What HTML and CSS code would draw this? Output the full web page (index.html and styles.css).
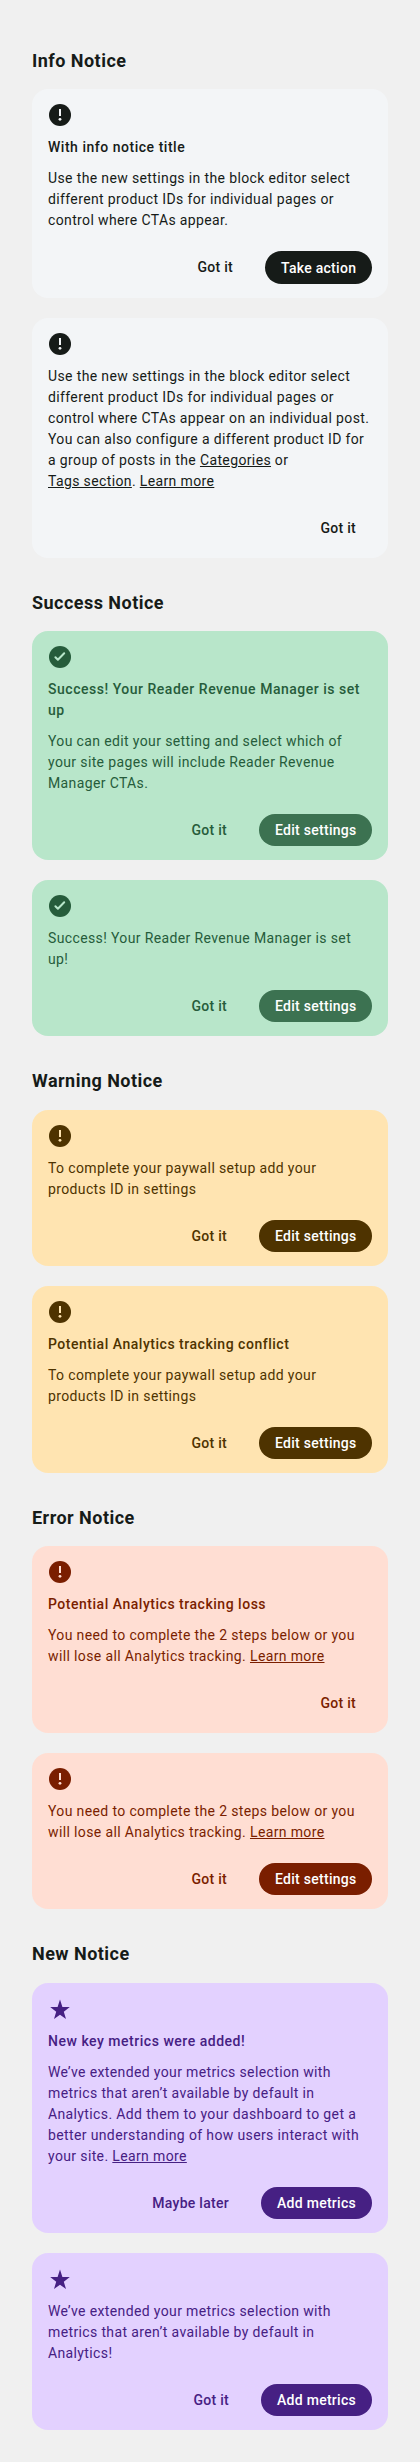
FILE: index.html
```html
<!DOCTYPE html>
<html lang="en">
<head>
<meta charset="utf-8">
<title>Notices</title>
<link rel="stylesheet" href="styles.css">
</head>
<body>
<svg class="sprite" aria-hidden="true">
  <symbol id="icon-alert" viewBox="0 0 24 24">
    <circle cx="12" cy="12" r="11" fill="currentColor"/>
    <rect class="cutout-fill" x="11" y="6" width="2" height="7"/>
    <circle class="cutout-fill" cx="12" cy="16.3" r="1.4"/>
  </symbol>
  <symbol id="icon-check" viewBox="0 0 24 24">
    <circle cx="12" cy="12" r="11" fill="currentColor"/>
    <path class="cutout-stroke" d="M7.4 12.2l2.5 2.6 6.3-6.6"/>
  </symbol>
  <symbol id="icon-star" viewBox="0 0 24 24">
    <path fill="currentColor" d="M12 2.5l2.4 7.5h7.4l-6 4.7L18 22l-6-4.3L6 22l2.2-7.3-6-4.7h7.4z"/>
  </symbol>
</svg>
<main class="page">
  <section class="group">
    <h2 class="heading">Info Notice</h2>
    <div class="list">
      <article class="notice info">
        <svg class="icon"><use href="#icon-alert"/></svg>
        <h3 class="title">With info notice title</h3>
        <p class="text">Use the new settings in the block editor select<br>different product IDs for individual pages or<br>control where CTAs appear.</p>
        <div class="actions"><button class="btn ghost">Got it</button><button class="btn solid tall">Take action</button></div>
      </article>
      <article class="notice info">
        <svg class="icon"><use href="#icon-alert"/></svg>
        <p class="text">Use the new settings in the block editor select<br>different product IDs for individual pages or<br>control where CTAs appear on an individual post.<br>You can also configure a different product ID for<br>a group of posts in the <a href="#">Categories</a> or<br><a href="#">Tags section</a>. <a href="#">Learn more</a></p>
        <div class="actions"><button class="btn ghost">Got it</button></div>
      </article>
    </div>
  </section>
  <section class="group">
    <h2 class="heading">Success Notice</h2>
    <div class="list">
      <article class="notice success">
        <svg class="icon"><use href="#icon-check"/></svg>
        <h3 class="title">Success! Your Reader Revenue Manager is set<br>up</h3>
        <p class="text">You can edit your setting and select which of<br>your site pages will include Reader Revenue<br>Manager CTAs.</p>
        <div class="actions"><button class="btn ghost">Got it</button><button class="btn solid edit">Edit settings</button></div>
      </article>
      <article class="notice success">
        <svg class="icon"><use href="#icon-check"/></svg>
        <p class="text">Success! Your Reader Revenue Manager is set<br>up!</p>
        <div class="actions"><button class="btn ghost">Got it</button><button class="btn solid edit">Edit settings</button></div>
      </article>
    </div>
  </section>
  <section class="group">
    <h2 class="heading">Warning Notice</h2>
    <div class="list">
      <article class="notice warning">
        <svg class="icon"><use href="#icon-alert"/></svg>
        <p class="text">To complete your paywall setup add your<br>products ID in settings</p>
        <div class="actions"><button class="btn ghost">Got it</button><button class="btn solid edit">Edit settings</button></div>
      </article>
      <article class="notice warning">
        <svg class="icon"><use href="#icon-alert"/></svg>
        <h3 class="title">Potential Analytics tracking conflict</h3>
        <p class="text">To complete your paywall setup add your<br>products ID in settings</p>
        <div class="actions"><button class="btn ghost">Got it</button><button class="btn solid edit">Edit settings</button></div>
      </article>
    </div>
  </section>
  <section class="group">
    <h2 class="heading">Error Notice</h2>
    <div class="list">
      <article class="notice error">
        <svg class="icon"><use href="#icon-alert"/></svg>
        <h3 class="title">Potential Analytics tracking loss</h3>
        <p class="text">You need to complete the 2 steps below or you<br>will lose all Analytics tracking. <a href="#">Learn more</a></p>
        <div class="actions"><button class="btn ghost">Got it</button></div>
      </article>
      <article class="notice error">
        <svg class="icon"><use href="#icon-alert"/></svg>
        <p class="text">You need to complete the 2 steps below or you<br>will lose all Analytics tracking. <a href="#">Learn more</a></p>
        <div class="actions"><button class="btn ghost">Got it</button><button class="btn solid edit">Edit settings</button></div>
      </article>
    </div>
  </section>
  <section class="group">
    <h2 class="heading">New Notice</h2>
    <div class="list">
      <article class="notice new">
        <svg class="icon"><use href="#icon-star"/></svg>
        <h3 class="title">New key metrics were added!</h3>
        <p class="text">We’ve extended your metrics selection with<br>metrics that aren’t available by default in<br>Analytics. Add them to your dashboard to get a<br>better understanding of how users interact with<br>your site. <a href="#">Learn more</a></p>
        <div class="actions"><button class="btn ghost">Maybe later</button><button class="btn solid add">Add metrics</button></div>
      </article>
      <article class="notice new">
        <svg class="icon"><use href="#icon-star"/></svg>
        <p class="text">We’ve extended your metrics selection with<br>metrics that aren’t available by default in<br>Analytics!</p>
        <div class="actions"><button class="btn ghost">Got it</button><button class="btn solid add">Add metrics</button></div>
      </article>
    </div>
  </section>
</main>
</body>
</html>
```
FILE: styles.css
```css
* {
  box-sizing: border-box;
}

body {
  margin: 0;
  background: #f0f0f0;
  color: #161b18;
  font-family: Roboto, "Liberation Sans", sans-serif;
}

.sprite {
  display: none;
}

.page {
  display: flex;
  flex-direction: column;
  gap: 32px;
  min-height: 2462px;
  padding: 47.6px 32px 32px;
}

.heading {
  margin: 0 0 16px;
  font-size: 18px;
  font-weight: 700;
  line-height: 25.4px;
  letter-spacing: 0.47px;
}

.list {
  display: flex;
  flex-direction: column;
  gap: 20px;
}

.notice {
  display: flex;
  flex-direction: column;
  padding: 14px 16px;
  border-radius: 16px;
  background: var(--surface);
  color: var(--ink);
}

.info {
  --surface: #f3f5f7;
  --ink: #161b18;
  --action: #161b18;
}

.success {
  --surface: #b8e6ca;
  --ink: #265c3b;
  --action: #3c7251;
}

.warning {
  --surface: #ffe4b1;
  --ink: #4e3300;
  --action: #4e3300;
}

.error {
  --surface: #ffded3;
  --ink: #7a1e00;
  --action: #7a1e00;
}

.new {
  --surface: #e3d1ff;
  --ink: #462083;
  --action: #462083;
}

.icon {
  display: block;
  width: 24px;
  height: 24px;
}

.cutout-fill {
  fill: var(--surface);
}

.cutout-stroke {
  fill: none;
  stroke: var(--surface);
  stroke-width: 2;
  stroke-linecap: round;
  stroke-linejoin: round;
}

.title,
.text {
  margin: 10px 0 0;
  font-size: 14px;
  line-height: 21px;
  white-space: nowrap;
}

.title {
  font-weight: 500;
  letter-spacing: 0.52px;
}

.text {
  font-weight: 400;
  letter-spacing: 0.37px;
}

.text a {
  color: inherit;
  text-decoration: underline;
}

.actions {
  display: flex;
  justify-content: flex-end;
  gap: 16px;
  margin-top: 20px;
}

.btn {
  height: 32px;
  padding: 0 16px;
  border: 0;
  border-radius: 17px;
  background: none;
  color: inherit;
  font: 500 14px/20px Roboto, "Liberation Sans", sans-serif;
  letter-spacing: 0.28px;
  white-space: nowrap;
}

.solid {
  background: var(--action);
  color: #fff;
}

.tall {
  width: 107px;
  height: 33px;
}

.edit {
  width: 113px;
}

.add {
  width: 111px;
}
```
